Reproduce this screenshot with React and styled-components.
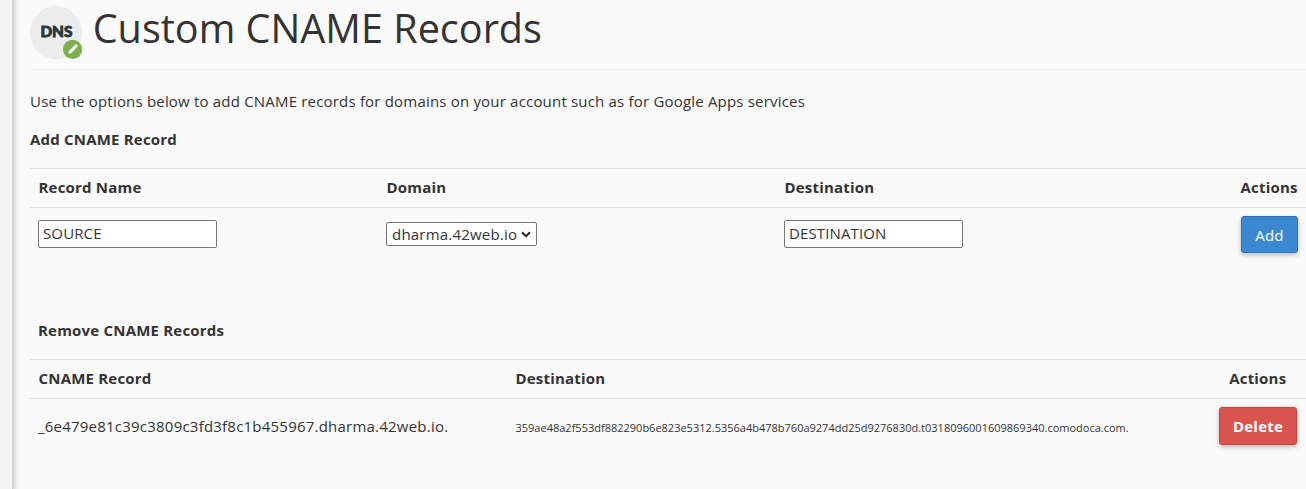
import React from 'react';
import styled, { createGlobalStyle } from 'styled-components';

const GlobalStyle = createGlobalStyle`
  * { box-sizing: border-box; }
  body {
    margin: 0;
    background: #fafafa;
    color: #333;
    font: 400 15px/22px "Open Sans", sans-serif;
    letter-spacing: 0.2px;
    overflow: hidden;
  }
`;

const Page = styled.div`
  display: flex;
  height: 489px;
  overflow: hidden;
  white-space: nowrap;
`;

const Gutter = styled.aside`
  flex: 0 0 12px;
  background: #f4f4f4;
`;

const Main = styled.main`
  flex: 1;
  min-width: 0;
  padding-left: 18px;
  background: linear-gradient(to right, #d6d6d6 0, #dcdcdc 2px, #ececec 4px, #f6f6f6 7px, #fafafa 10px);
`;

const Header = styled.header`
  display: flex;
  height: 70px;
  border-bottom: 1px solid #eee;
`;

const DnsIcon = styled.svg`
  flex: none;
  width: 53px;
  height: 54px;
  margin-top: 6px;
`;

const Title = styled.h1`
  margin: 0 0 0 9.7px;
  font-size: 39.6px;
  font-weight: 400;
  line-height: 56px;
  letter-spacing: 0;
`;

const Intro = styled.p`
  margin: 20px 0 0;
  letter-spacing: 0.19px;
`;

const SectionTitle = styled.h2`
  margin: ${({ $top }) => $top}px 0 0 ${({ $indent = 0 }) => $indent}px;
  font-size: 15px;
  line-height: 22px;
  font-weight: 700;
`;

const Table = styled.section`
  margin-top: 18px;
`;

const Row = styled.div`
  display: grid;
  grid-template-columns: ${({ $columns }) => $columns};
  border-top: 1px solid #ddd;
  height: ${({ $height }) => $height}px;
`;

const Cell = styled.div`
  padding: ${({ $top = 8 }) => $top}px 8px 0 ${({ $left = 8 }) => $left}px;
  text-align: ${({ $align }) => $align || 'left'};
`;

const HeadCell = styled(Cell)`
  padding: 7px 8px 0 8.5px;
  font-weight: 700;
`;

const NameCell = styled(Cell)`
  letter-spacing: 0.22px;
`;

const TargetCell = styled(Cell)`
  padding-left: 8.5px;
  font-size: 11px;
  letter-spacing: 0;
`;

const TextInput = styled.input`
  display: block;
  width: 179px;
  height: 28px;
  padding: 0 4px 2px;
  border: 1px solid #767676;
  border-radius: 2px;
  background: #fff;
  color: #333;
  font: inherit;
  letter-spacing: 0.12px;
  outline: none;
`;

const DomainSelect = styled.button`
  display: flex;
  align-items: center;
  justify-content: space-between;
  width: 151px;
  height: 24px;
  padding: 0 5px;
  border: 1px solid #767676;
  border-radius: 2px;
  background: #fff;
  color: #333;
  font: inherit;
  letter-spacing: 0.2px;
`;

const ActionButton = styled.button`
  display: block;
  width: ${({ $width }) => $width}px;
  height: ${({ $height }) => $height}px;
  padding: ${({ $danger }) => ($danger ? '0' : '1px 0 0')};
  border: 1px solid ${({ $danger }) => ($danger ? '#d43f3a' : '#2a74b8')};
  border-radius: 3px;
  background: ${({ $danger }) => ($danger ? '#d9534f' : '#3a89d0')};
  color: #fff;
  font: inherit;
  font-weight: ${({ $danger }) => ($danger ? 700 : 500)};
  letter-spacing: 0.2px;
  box-shadow: 0 2px 5px rgba(0, 0, 0, 0.26);
`;

const ADD_COLUMNS = '348px 398px 456px 74px';
const REMOVE_COLUMNS = '477px 702px 97px';

function DnsLogo() {
  return (
    <DnsIcon viewBox="0 0 53 54">
      <ellipse cx="26" cy="26.5" rx="26" ry="26.5" fill="#ececec" />
      <text
        x="10.4"
        y="31.1"
        textLength="32"
        lengthAdjust="spacingAndGlyphs"
        fontFamily="Lato, sans-serif"
        fontSize="14.3"
        fontWeight="900"
        letterSpacing="0"
        fill="#263640"
        stroke="#263640"
        strokeWidth="0.8"
      >
        DNS
      </text>
      <circle cx="42.6" cy="43.4" r="9.6" fill="#7fb24f" />
      <path d="M38.2 48l1-3.3 6-6q1.1-.8 2.1.1.8 1 0 2l-6 6.1z" fill="#fff" />
    </DnsIcon>
  );
}

function AddTable() {
  return (
    <Table>
      <Row $columns={ADD_COLUMNS} $height={39}>
        <HeadCell>Record Name</HeadCell>
        <HeadCell>Domain</HeadCell>
        <HeadCell>Destination</HeadCell>
        <HeadCell>Actions</HeadCell>
      </Row>
      <Row $columns={ADD_COLUMNS} $height={56}>
        <Cell $top={12}><TextInput defaultValue="SOURCE" aria-label="Record Name" /></Cell>
        <Cell $top={14}>
          <DomainSelect type="button">
            dharma.42web.io
            <svg width="10" height="7" viewBox="0 0 10 7" fill="none" stroke="#222" strokeWidth="2">
              <path d="M1 1.2l4 4 4-4" />
            </svg>
          </DomainSelect>
        </Cell>
        <Cell $top={12}><TextInput defaultValue="DESTINATION" aria-label="Destination" /></Cell>
        <Cell $top={8} $left={9}><ActionButton type="button" $width={57} $height={37}>Add</ActionButton></Cell>
      </Row>
    </Table>
  );
}

function RemoveTable() {
  return (
    <Table>
      <Row $columns={REMOVE_COLUMNS} $height={39}>
        <HeadCell>CNAME Record</HeadCell>
        <HeadCell>Destination</HeadCell>
        <HeadCell $align="center">Actions</HeadCell>
      </Row>
      <Row $columns={REMOVE_COLUMNS} $height={56}>
        <NameCell $top={16}>_6e479e81c39c3809c3fd3f8c1b455967.dharma.42web.io.</NameCell>
        <TargetCell $top={18}>
          359ae48a2f553df882290b6e823e5312.5356a4b478b760a9274dd25d9276830d.t0318096001609869340.comodoca.com.
        </TargetCell>
        <Cell $left={10}><ActionButton type="button" $danger $width={78} $height={38}>Delete</ActionButton></Cell>
      </Row>
    </Table>
  );
}

export default function App() {
  return (
    <Page>
      <GlobalStyle />
      <Gutter />
      <Main>
        <Header>
          <DnsLogo />
          <Title>Custom CNAME Records</Title>
        </Header>
        <Intro>Use the options below to add CNAME records for domains on your account such as for Google Apps services</Intro>
        <SectionTitle $top={16}>Add CNAME Record</SectionTitle>
        <AddTable />
        <SectionTitle $top={56} $indent={8}>Remove CNAME Records</SectionTitle>
        <RemoveTable />
      </Main>
    </Page>
  );
}
